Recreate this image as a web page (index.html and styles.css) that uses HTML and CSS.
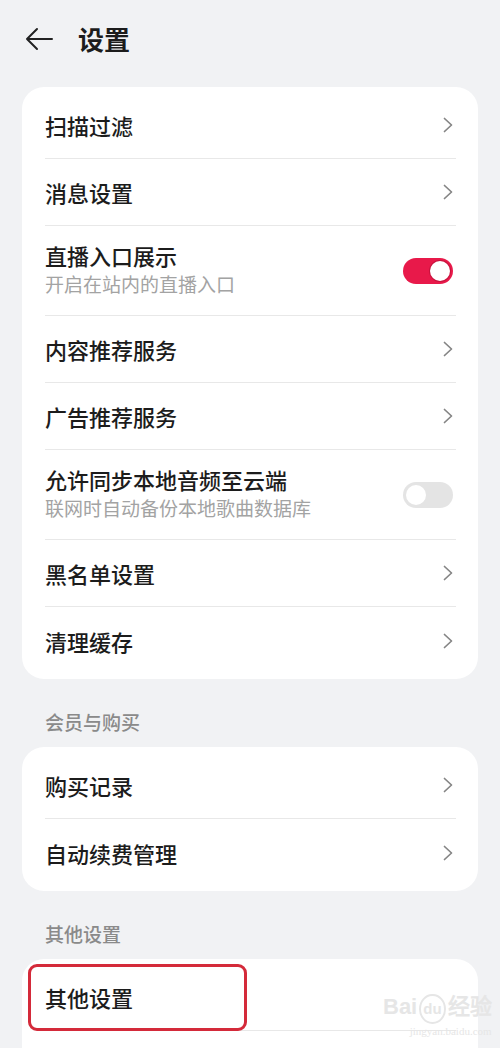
FILE: index.html
```html
<!DOCTYPE html>
<html lang="zh-CN">
<head>
    <meta charset="UTF-8">
    <meta name="viewport" content="width=device-width, initial-scale=1.0">
    <title>设置</title>
    <link rel="stylesheet" href="styles.css">
</head>
<body>

<header class="topbar">
    <svg class="back" width="28" height="24" viewBox="0 0 28 24">
        <path d="M27 12H2M12 2L2 12l10 10" fill="none" stroke="#222" stroke-width="2" stroke-linecap="round" stroke-linejoin="round"/>
    </svg>
    <h1>设置</h1>
</header>

<section class="card">
    <div class="row"><div class="row-in"><span class="title">扫描过滤</span><svg class="chev" width="10" height="16" viewBox="0 0 10 16"><path d="M1.5 1.5L8.5 8l-7 6.5"/></svg></div></div>
    <div class="row"><div class="row-in"><span class="title">消息设置</span><svg class="chev" width="10" height="16" viewBox="0 0 10 16"><path d="M1.5 1.5L8.5 8l-7 6.5"/></svg></div></div>
    <div class="row tall"><div class="row-in">
        <div class="texts"><span class="title">直播入口展示</span><span class="sub">开启在站内的直播入口</span></div>
        <span class="switch on"></span>
    </div></div>
    <div class="row"><div class="row-in"><span class="title">内容推荐服务</span><svg class="chev" width="10" height="16" viewBox="0 0 10 16"><path d="M1.5 1.5L8.5 8l-7 6.5"/></svg></div></div>
    <div class="row"><div class="row-in"><span class="title">广告推荐服务</span><svg class="chev" width="10" height="16" viewBox="0 0 10 16"><path d="M1.5 1.5L8.5 8l-7 6.5"/></svg></div></div>
    <div class="row tall"><div class="row-in">
        <div class="texts"><span class="title">允许同步本地音频至云端</span><span class="sub">联网时自动备份本地歌曲数据库</span></div>
        <span class="switch"></span>
    </div></div>
    <div class="row"><div class="row-in"><span class="title">黑名单设置</span><svg class="chev" width="10" height="16" viewBox="0 0 10 16"><path d="M1.5 1.5L8.5 8l-7 6.5"/></svg></div></div>
    <div class="row"><div class="row-in"><span class="title">清理缓存</span><svg class="chev" width="10" height="16" viewBox="0 0 10 16"><path d="M1.5 1.5L8.5 8l-7 6.5"/></svg></div></div>
</section>

<h2 class="group">会员与购买</h2>
<section class="card">
    <div class="row"><div class="row-in"><span class="title">购买记录</span><svg class="chev" width="10" height="16" viewBox="0 0 10 16"><path d="M1.5 1.5L8.5 8l-7 6.5"/></svg></div></div>
    <div class="row"><div class="row-in"><span class="title">自动续费管理</span><svg class="chev" width="10" height="16" viewBox="0 0 10 16"><path d="M1.5 1.5L8.5 8l-7 6.5"/></svg></div></div>
</section>

<h2 class="group">其他设置</h2>
<section class="card last">
    <div class="row marked"><div class="row-in"><span class="title">其他设置</span></div></div>
    <div class="row"><div class="row-in"></div></div>
</section>

<div class="watermark">
    <span class="wm-logo">Bai<b>du</b>经验</span>
    <span class="wm-url">jingyan.baidu.com</span>
</div>

</body>
</html>
```

FILE: styles.css
```css
body {
    margin: 0;
    height: 1048px;
    overflow: hidden;
    background-color: #f1f2f4;
    font-family: "Noto Sans CJK SC", "Noto Sans", sans-serif;
    color: #1c1c1c;
    position: relative;
}
.topbar {
    display: flex;
    align-items: center;
    height: 78px;
    padding: 0 0 9px 25px;
}
.back {
    display: block;
    margin-right: 25px;
}
.topbar h1 {
    margin: 0;
    font-size: 26px;
    font-weight: 700;
    line-height: 32px;
}
.card {
    background-color: #fff;
    border-radius: 22px;
    margin: 0 22px;
    padding: 5px 0;
}
.card.last {
    padding-bottom: 0;
}
.row {
    position: relative;
    height: 67px;
    padding: 0 22px 0 23px;
}
.row.tall {
    height: 90px;
}
.row-in {
    display: flex;
    align-items: center;
    justify-content: space-between;
    height: 100%;
    padding-right: 3px;
    border-bottom: 1px solid #e8e8e8;
    box-sizing: border-box;
}
.card .row:last-child .row-in {
    border-bottom: none;
}
.texts {
    display: flex;
    flex-direction: column;
}
.title {
    font-size: 22px;
    font-weight: 500;
    line-height: 30px;
}
.tall .title {
    margin-top: -3px;
}
.sub {
    font-size: 19px;
    color: #a3a3a3;
    line-height: 28px;
}
.chev {
    display: block;
    fill: none;
    stroke: #858585;
    stroke-width: 1.7;
    stroke-linecap: round;
    stroke-linejoin: round;
}
.switch {
    position: relative;
    width: 50px;
    height: 26px;
    border-radius: 13px;
    background-color: #e4e4e4;
}
.switch::after {
    content: "";
    position: absolute;
    top: 3px;
    left: 3px;
    width: 20px;
    height: 20px;
    border-radius: 50%;
    background-color: #fff;
}
.switch.on {
    background-color: #e8194a;
}
.switch.on::after {
    left: auto;
    right: 3px;
    box-shadow: 0 0 0 1px #c8123d;
}
.group {
    margin: 0;
    padding: 31px 45px 13px;
    font-size: 19px;
    font-weight: 500;
    line-height: 24px;
    color: #8a8a8a;
}
/* red annotation box */
.marked::after {
    content: "";
    position: absolute;
    left: 6px;
    top: 0;
    width: 219px;
    height: 67px;
    border: 3px solid #d42a3a;
    border-radius: 9px;
    box-sizing: border-box;
}
.watermark {
    position: absolute;
    left: 383px;
    top: 994px;
    display: flex;
    flex-direction: column;
    align-items: flex-end;
    color: #e6e6e6;
}
.wm-logo {
    font-family: "Liberation Sans", sans-serif;
    font-size: 22px;
    font-weight: 700;
    line-height: 26px;
}
.wm-logo b {
    display: inline-block;
    font-size: 15px;
    border: 2px solid #e6e6e6;
    border-radius: 50%;
    padding: 0 2px;
    margin: 0 2px;
}
.wm-url {
    font-family: "Liberation Serif", serif;
    font-size: 11px;
    line-height: 14px;
}
```
